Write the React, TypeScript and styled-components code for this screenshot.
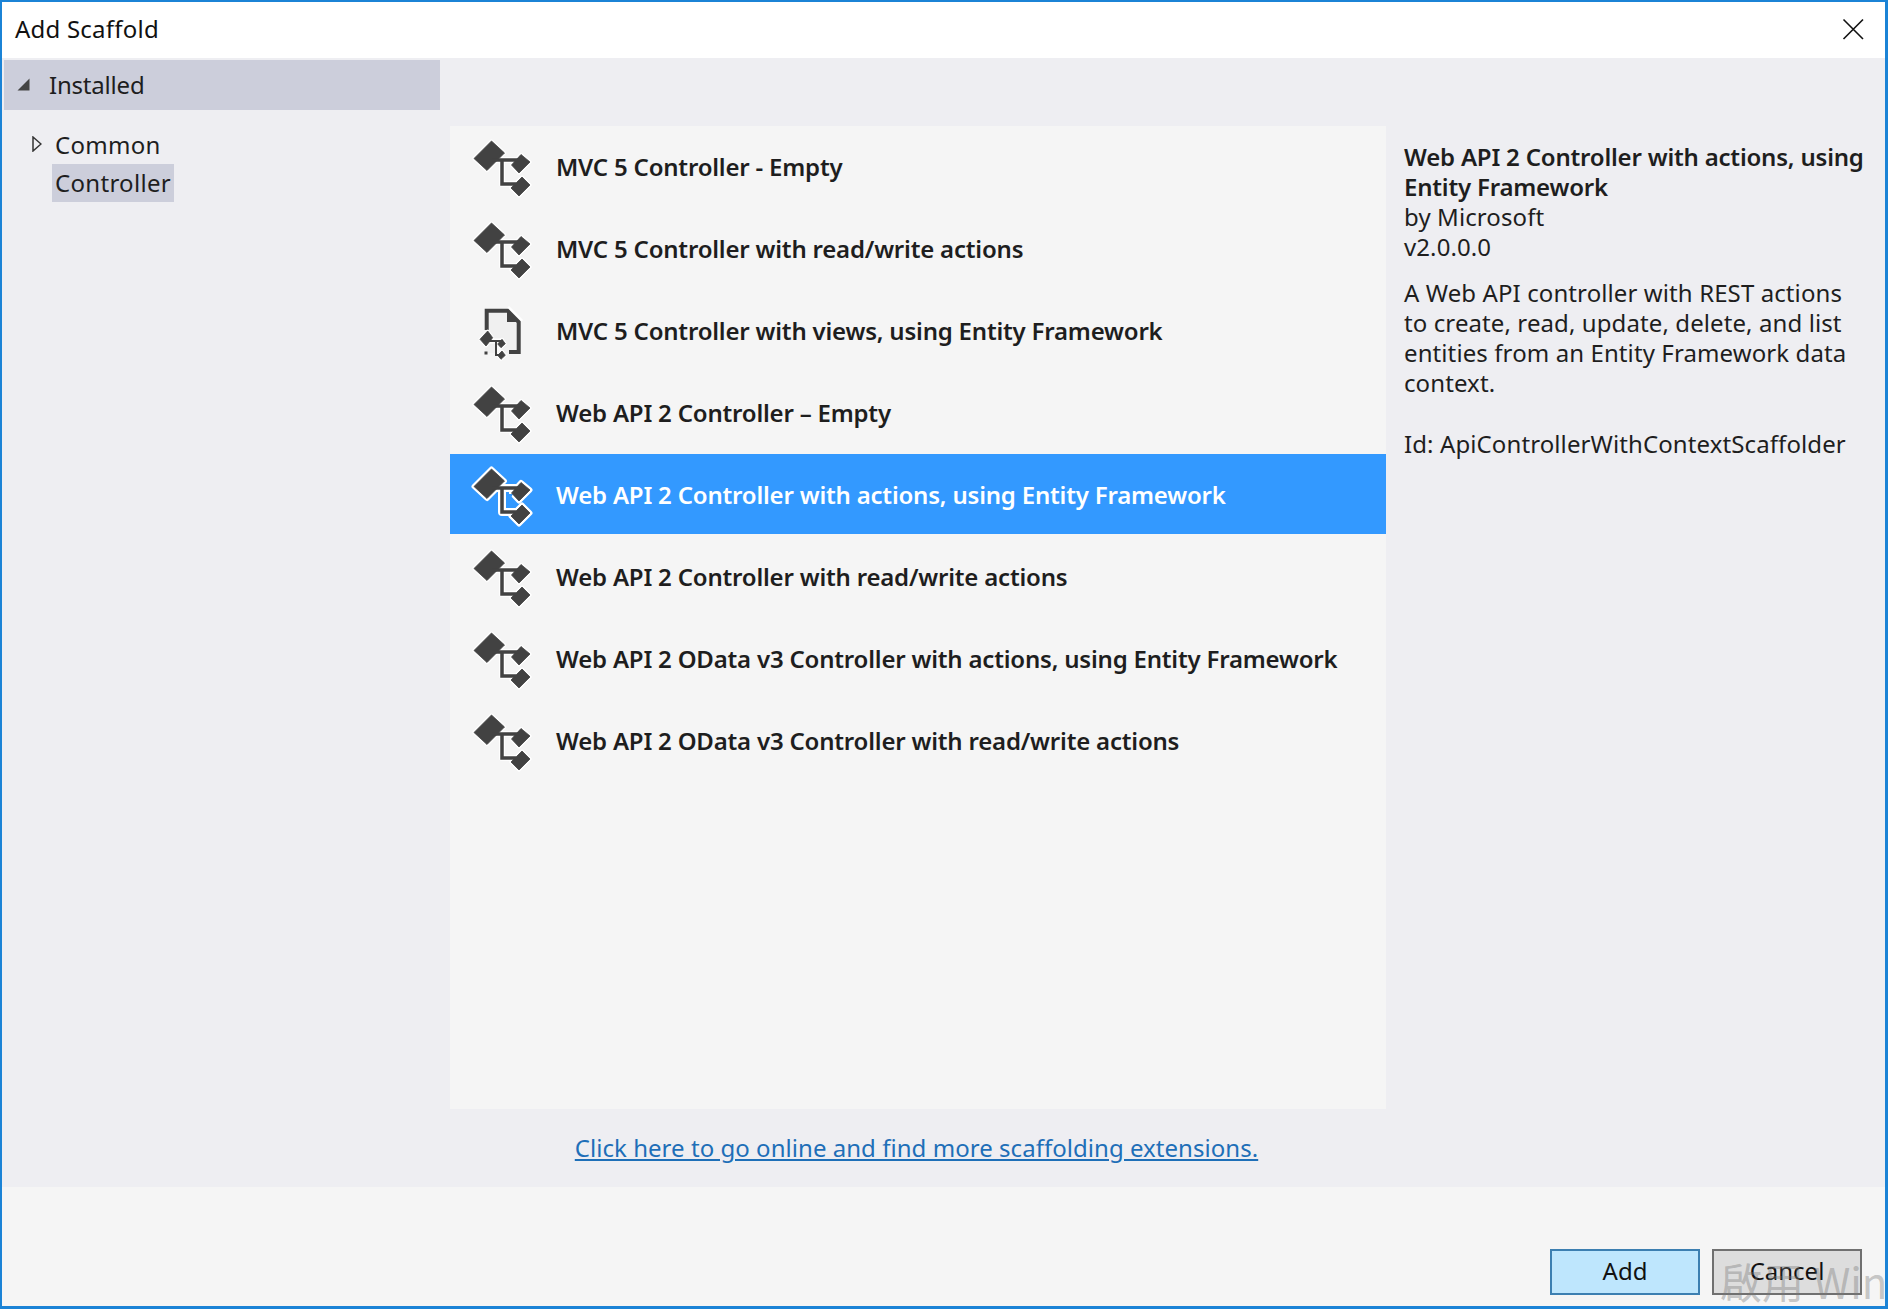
import React from "react";
import styled, { createGlobalStyle } from "styled-components";

const Global = createGlobalStyle`
  html, body { margin: 0; padding: 0; background: #ffffff; }
  * { box-sizing: border-box; }
`;

const Dialog = styled.div`
  width: 1888px;
  height: 1309px;
  display: flex;
  flex-direction: column;
  border: 2px solid #1b83d6;
  border-bottom-width: 3px;
  border-right-width: 3px;
  font-family: "Noto Sans", "Open Sans", sans-serif;
  color: #1e1e1e;
  position: relative;
  overflow: hidden;
`;

const TitleBar = styled.header`
  height: 56px;
  flex: none;
  background: #ffffff;
  display: flex;
  align-items: center;
  justify-content: space-between;
  padding: 0 21px 4px 13px;
  font-size: 24px;
  letter-spacing: 0.22px;
  color: #111111;
`;

const CloseGlyph = styled.svg`
  width: 22px;
  height: 22px;
  display: block;
  margin-top: 2px;
`;

const Body = styled.main`
  flex: 1;
  background: #eeeef2;
  display: flex;
  min-height: 0;
`;

const Sidebar = styled.nav`
  width: 448px;
  flex: none;
  padding: 2px 0 0 2px;
  font-size: 24px;
`;

const InstalledRow = styled.div`
  width: 436px;
  height: 50px;
  background: #cccedb;
  display: flex;
  align-items: center;
  padding: 0 0 2px 13px;
  gap: 19px;
  letter-spacing: -0.2px;
`;

const TreeList = styled.div`
  padding: 16px 0 0 28px;
  display: flex;
  flex-direction: column;
  letter-spacing: 0.3px;
`;

const TreeRow = styled.div`
  height: 38px;
  display: flex;
  align-items: center;
  gap: 13px;
  padding-bottom: 2px;
`;

const TreeLeaf = styled.div`
  height: 38px;
  margin-left: 20px;
  width: 122px;
  padding: 0 0 1px 3px;
  display: flex;
  align-items: center;
  background: #cccedb;
`;

const Center = styled.section`
  width: 936px;
  flex: none;
  padding-top: 68px;
  display: flex;
  flex-direction: column;
`;

const List = styled.ul`
  list-style: none;
  margin: 0;
  padding: 0;
  height: 983px;
  background: #f5f5f5;
`;

const Row = styled.li<{ $selected?: boolean }>`
  height: 80px;
  margin-bottom: 2px;
  display: flex;
  align-items: center;
  padding-left: 20px;
  gap: 26px;
  font-size: 24px;
  font-weight: 600;
  letter-spacing: -0.2px;
  white-space: nowrap;
  color: ${(p) => (p.$selected ? "#ffffff" : "#1e1e1e")};
  background: ${(p) => (p.$selected ? "#3399ff" : "transparent")};
`;

const Link = styled.a`
  display: block;
  text-align: center;
  margin-top: 22px;
  padding-right: 3px;
  font-size: 24px;
  letter-spacing: 0.04px;
  color: #1e6fb8;
  text-decoration: underline;
`;

const Details = styled.aside`
  width: 480px;
  flex: none;
  padding: 84px 0 0 18px;
  font-size: 24px;
  line-height: 30px;
  letter-spacing: 0.1px;
`;

const DetailTitle = styled.div`
  font-weight: 600;
  letter-spacing: -0.2px;
`;

const DetailBlock = styled.div<{ $gap: number }>`
  margin-top: ${(p) => p.$gap}px;
`;

const Footer = styled.footer`
  height: 119px;
  flex: none;
  background: #f5f5f5;
  display: flex;
  justify-content: flex-end;
  align-items: flex-end;
  gap: 12px;
  padding: 0 23px 11px 0;
`;

const Button = styled.button<{ $primary?: boolean }>`
  width: 150px;
  height: 46px;
  font: 24px "Noto Sans", "Open Sans", sans-serif;
  color: #111111;
  padding: 0 0 4px;
  background: ${(p) => (p.$primary ? "#bee6fd" : "#dddddd")};
  border: 2px solid ${(p) => (p.$primary ? "#3c7fb1" : "#707070")};
`;

const Watermark = styled.div`
  position: absolute;
  left: 1718px;
  bottom: 2px;
  font-size: 42px;
  line-height: 46px;
  color: rgba(120, 120, 120, 0.4);
  white-space: nowrap;
  font-family: "Noto Sans CJK TC", "Noto Sans", sans-serif;
  pointer-events: none;
`;

const IconSvg = styled.svg`
  display: block;
  flex: none;
  overflow: visible;
  filter: blur(0.45px);
`;

const Shapes = () => (
  <>
    <path d="M21.5 5 34.5 17 17 34.5 4 22.5Z" />
    <path d="M51 18.5 60 26 49 37 41.5 29Z" />
    <path d="M52 41 60 49 49 60 41 52Z" />
  </>
);

const CONNECTOR = "M22 24H50M32 24V48H46";

const ScaffoldIcon = ({ selected }: { selected?: boolean }) => (
  <IconSvg width="60" height="60" viewBox="0 0 60 60">
    <g
      fill="#ffffff"
      stroke="#ffffff"
      strokeLinejoin="round"
      strokeWidth={selected ? 5 : 3.5}
      opacity={selected ? 1 : 0.85}
    >
      <Shapes />
      <path d={CONNECTOR} fill="none" strokeWidth={selected ? 8 : 6} />
    </g>
    {selected && <path d="M36 30H43L37 41Z" fill="#3399ff" />}
    <g fill="#424242" stroke="#424242" strokeWidth={0.8} strokeLinejoin="round">
      <Shapes />
    </g>
    <path d={CONNECTOR} fill="none" stroke="#424242" strokeWidth={3.5} />
  </IconSvg>
);

const DocumentIcon = () => (
  <IconSvg width="60" height="60" viewBox="0 0 60 60">
    <path d="M15 9H38L50 21V53H15Z" fill="#f0f0f0" />
    <path d="M38 7 52 21" stroke="#ffffff" strokeWidth={3} fill="none" />
    <path
      d="M16.7 30V10.7H37.5L48.7 22V52H39"
      fill="none"
      stroke="#424242"
      strokeWidth={4}
    />
    <path d="M37 10 49 22H37Z" fill="#424242" />
    <g fill="#ffffff" stroke="#ffffff" strokeWidth={3} strokeLinejoin="round" opacity={0.9}>
      <path d="M17.7 31 22.7 37.7 16 46 10 39.3Z" />
      <path d="M32 39.3 35.3 43.7 31 47.7 27.7 44Z" />
      <path d="M32 51 35.3 55.3 31 59.3 27.7 55.3Z" />
      <path d="M20 41H34M29 41V55" fill="none" strokeWidth={5} />
    </g>
    <g fill="#424242" stroke="#424242" strokeWidth={0.8} strokeLinejoin="round">
      <path d="M17.7 31 22.7 37.7 16 46 10 39.3Z" />
      <path d="M32 39.3 35.3 43.7 31 47.7 27.7 44Z" />
      <path d="M32 51 35.3 55.3 31 59.3 27.7 55.3Z" />
    </g>
    <g fill="#424242">
      <rect x="19" y="40" width="14" height="2" />
      <rect x="25" y="40" width="2" height="15" />
      <rect x="25" y="54" width="5" height="2" />
      <rect x="14.5" y="51.5" width="3" height="3" />
    </g>
  </IconSvg>
);

const rows: { label: string; icon?: "doc"; selected?: boolean }[] = [
  { label: "MVC 5 Controller - Empty" },
  { label: "MVC 5 Controller with read/write actions" },
  { label: "MVC 5 Controller with views, using Entity Framework", icon: "doc" },
  { label: "Web API 2 Controller – Empty" },
  { label: "Web API 2 Controller with actions, using Entity Framework", selected: true },
  { label: "Web API 2 Controller with read/write actions" },
  { label: "Web API 2 OData v3 Controller with actions, using Entity Framework" },
  { label: "Web API 2 OData v3 Controller with read/write actions" },
];

export default function App() {
  return (
    <>
      <Global />
      <Dialog>
        <TitleBar>
          Add Scaffold
          <CloseGlyph viewBox="0 0 22 22">
            <path d="M1.5 1.5 21 21M21 1.5 1.5 21" stroke="#111" strokeWidth="1.6" fill="none" />
          </CloseGlyph>
        </TitleBar>
        <Body>
          <Sidebar>
            <InstalledRow>
              <svg width="13" height="13" viewBox="0 0 13 13">
                <path d="M12.5 0.5V12.5H0.5Z" fill="#444" />
              </svg>
              Installed
            </InstalledRow>
            <TreeList>
              <TreeRow>
                <svg width="10" height="16" viewBox="0 0 10 16">
                  <path d="M1 1 9 8 1 15Z" fill="none" stroke="#333" strokeWidth="1.5" />
                </svg>
                Common
              </TreeRow>
              <TreeLeaf>Controller</TreeLeaf>
            </TreeList>
          </Sidebar>
          <Center>
            <List>
              {rows.map((r) => (
                <Row key={r.label} $selected={r.selected}>
                  {r.icon === "doc" ? <DocumentIcon /> : <ScaffoldIcon selected={r.selected} />}
                  {r.label}
                </Row>
              ))}
            </List>
            <Link href="#">Click here to go online and find more scaffolding extensions.</Link>
          </Center>
          <Details>
            <DetailTitle>Web API 2 Controller with actions, using Entity Framework</DetailTitle>
            <div>by Microsoft</div>
            <div>v2.0.0.0</div>
            <DetailBlock $gap={16}>
              A Web API controller with REST actions to create, read, update, delete, and list
              entities from an Entity Framework data context.
            </DetailBlock>
            <DetailBlock $gap={31}>Id: ApiControllerWithContextScaffolder</DetailBlock>
          </Details>
        </Body>
        <Footer>
          <Button $primary>Add</Button>
          <Button>Cancel</Button>
        </Footer>
        <Watermark>啟用 Win</Watermark>
      </Dialog>
    </>
  );
}
